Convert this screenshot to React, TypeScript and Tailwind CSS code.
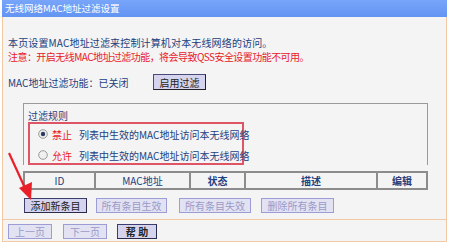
import React from "react";

const font = { fontFamily: '"Noto Sans CJK SC", "Noto Sans", sans-serif' };

function Btn({ w, children, disabled, bold }: { w: string; children: React.ReactNode; disabled?: boolean; bold?: boolean }) {
  return (
    <div
      className={`${w} h-[15px] flex items-center justify-center whitespace-nowrap text-[10px] leading-none border ${
        disabled
          ? "bg-[#e2e2f3] border-[#9d9dd6] text-[#9a9ac8]"
          : "bg-[#d4d4ee] border-[#3e3e6e] border-r-[#2a2a4a] border-b-[#2a2a4a] text-[#222]"
      } ${bold ? "font-bold" : ""}`}
    >
      {children}
    </div>
  );
}

function Radio({ checked }: { checked?: boolean }) {
  return (
    <svg width="10" height="10" viewBox="0 0 10 10" className="shrink-0">
      <circle cx="5" cy="5" r="4.3" fill="#f0f0f0" stroke="#9a9a9a" strokeWidth="1" />
      {checked && <circle cx="5" cy="5" r="2.2" fill="#2a3a60" />}
    </svg>
  );
}

export default function App() {
  return (
    <div className="relative w-[450px] h-[244px] bg-white overflow-hidden whitespace-nowrap" style={font}>
      <div className="ml-[2px] w-[445px] h-[17px] bg-gradient-to-b from-[#78a5fa] to-[#6294f2] text-white text-[9.5px] leading-[17px] pl-[3px]">
        无线网络MAC地址过滤设置
      </div>
      <div className="ml-[2px] w-[445px] h-[225px] bg-[#f4f4f4] border-x border-b border-[#f2c9a2] flex flex-col">
        <div className="pl-[5px] pt-[19px] text-[10px] leading-[14px]">
          <div className="text-[#23407e] tracking-[0.15px]">本页设置MAC地址过滤来控制计算机对本无线网络的访问。</div>
          <div className="text-[#e8202a] tracking-[-0.55px]">注意：开启无线MAC地址过滤功能，将会导致QSS安全设置功能不可用。</div>
        </div>
        <div className="pl-[5px] mt-[10px] flex items-center h-[16px]">
          <span className="text-[10px] text-[#23407e] w-[145px]">MAC地址过滤功能：已关闭</span>
          <div className="w-[53px] h-[16px] flex items-center justify-center text-[10px] bg-[#d4d4ee] border border-[#4a4a7a] border-r-[#222] border-b-[#222] text-[#222]">
            启用过滤
          </div>
        </div>
        <div className="ml-[20px] mt-[13px] w-[405px] h-[62px] border border-[#9a9a9a] border-b-0 flex flex-col">
          <div className="pl-[4px] pt-[5px] h-[18px] text-[10px] leading-[13px] text-[#23407e]">过滤规则</div>
          <div className="ml-[4px] w-[216px] h-[44px] border-2 border-[#de5566] flex flex-col justify-center gap-[8px] pl-[8px] pt-[2px]">
            <div className="flex items-center gap-[4px] text-[10px] leading-[13px]">
              <Radio checked />
              <span className="text-[#e8202a] mr-[3px]">禁止</span>
              <span className="text-[#23407e]">列表中生效的MAC地址访问本无线网络</span>
            </div>
            <div className="flex items-center gap-[4px] text-[10px] leading-[13px]">
              <Radio />
              <span className="text-[#e8202a] mr-[3px]">允许</span>
              <span className="text-[#23407e]">列表中生效的MAC地址访问本无线网络</span>
            </div>
          </div>
        </div>
        <div className="ml-[20px] mt-[6px] w-[405px] h-[19px] flex text-[10px] text-[#23407e] font-bold">
          <div className="w-[73px] border-2 border-[#8c8c8c] flex items-center justify-center font-normal">ID</div>
          <div className="w-[95px] border-2 border-l-0 border-[#8c8c8c] flex items-center justify-center font-normal">MAC地址</div>
          <div className="w-[55px] border-2 border-l-0 border-[#8c8c8c] flex items-center justify-center">状态</div>
          <div className="w-[132px] border-2 border-l-0 border-[#8c8c8c] flex items-center justify-center">描述</div>
          <div className="w-[50px] border-2 border-l-0 border-[#8c8c8c] flex items-center justify-center">编辑</div>
        </div>
        <div className="ml-[21px] mt-[8px] flex items-center gap-[9px]">
          <Btn w="w-[63px]">添加新条目</Btn>
          <Btn w="w-[71px]" disabled>所有条目生效</Btn>
          <div className="ml-[3px]"><Btn w="w-[72px]" disabled>所有条目失效</Btn></div>
          <div className="ml-[1px]"><Btn w="w-[73px]" disabled>删除所有条目</Btn></div>
        </div>
        <div className="mt-[6px] h-[1px] bg-[#f2c9a2]" />
        <div className="ml-[5px] mt-[4px] flex items-center gap-[11px]">
          <Btn w="w-[44px]" disabled>上一页</Btn>
          <Btn w="w-[44px]" disabled>下一页</Btn>
          <div className="-ml-[1px]"><Btn w="w-[40px]" bold>帮 助</Btn></div>
        </div>
      </div>
      <svg className="absolute left-0 top-0 pointer-events-none" width="450" height="244" viewBox="0 0 450 244">
        <line x1="9" y1="153" x2="25" y2="188" stroke="#e8202a" strokeWidth="2.2" />
        <polygon points="19,188 32,182 31,200" fill="#e8202a" />
      </svg>
    </div>
  );
}
